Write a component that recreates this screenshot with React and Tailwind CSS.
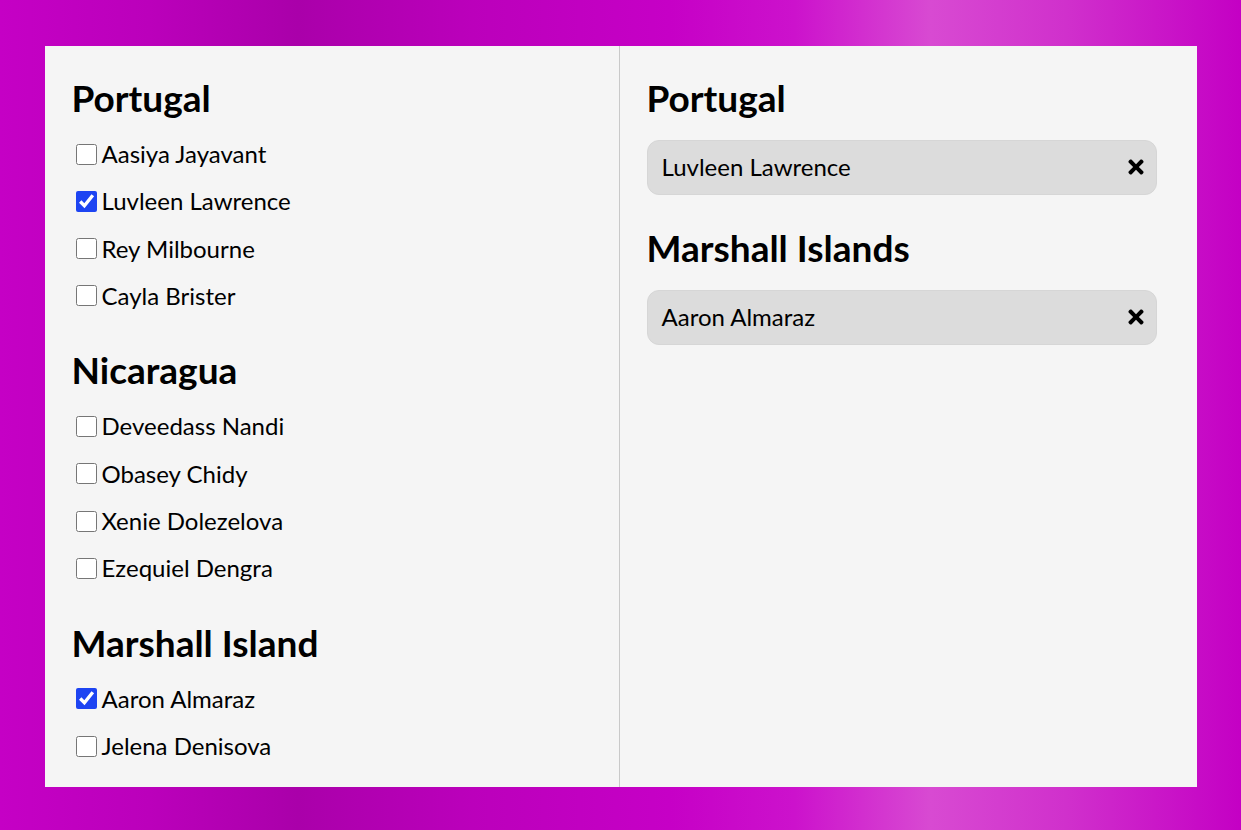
import React, { useState } from "react";
import { FaTimes } from "react-icons/fa";

const groups = [
  { name: "Portugal", people: ["Aasiya Jayavant", "Luvleen Lawrence", "Rey Milbourne", "Cayla Brister"] },
  { name: "Nicaragua", people: ["Deveedass Nandi", "Obasey Chidy", "Xenie Dolezelova", "Ezequiel Dengra"] },
  { name: "Marshall Island", people: ["Aaron Almaraz", "Jelena Denisova"] },
];

const selected = [
  { name: "Portugal", people: ["Luvleen Lawrence"] },
  { name: "Marshall Islands", people: ["Aaron Almaraz"] },
];

export default function App() {
  const [checked, setChecked] = useState({ "Luvleen Lawrence": true, "Aaron Almaraz": true });
  return (
    <div
      className="w-full h-[830px] flex items-start justify-center pt-[46px]"
      style={{
        fontFamily: "Lato, 'Noto Sans', sans-serif",
        background:
          "linear-gradient(to right, #c500c5 0%, #bb00bb 12%, #aa00aa 24%, #bb00bb 38%, #c600c6 54%, #cc12cc 64%, #d84ad2 75%, #d030cc 86%, #c400c4 100%)",
      }}
    >
      <div className="w-[1152px] h-[741px] bg-[#f5f5f5] flex text-black">
        <div className="w-[575px] border-r border-[#c9c9c9] pl-[27px] pt-[30px] flex flex-col gap-[39.5px]">
          {groups.map((g) => (
            <div key={g.name} className="flex flex-col gap-[22px]">
              <h2 className="text-[37px] leading-[43px] font-bold">{g.name}</h2>
              <div className="flex flex-col gap-[21.33px]">
                {g.people.map((p) => (
                  <label key={p} className="flex items-center h-[26px] text-[24px] leading-[26px]">
                    <input
                      type="checkbox"
                      checked={!!checked[p]}
                      onChange={() => setChecked({ ...checked, [p]: !checked[p] })}
                      className="w-[21px] h-[21px] ml-[4px] mr-[5px] accent-[#1d44f2]"
                    />
                    <span>{p}</span>
                  </label>
                ))}
              </div>
            </div>
          ))}
        </div>
        <div className="w-[576px] pl-[27px] pt-[30px] flex flex-col gap-[31.5px]">
          {selected.map((g) => (
            <div key={g.name} className="flex flex-col gap-[20.5px]">
              <h2 className="text-[37px] leading-[43px] font-bold">{g.name}</h2>
              {g.people.map((p) => (
                <div
                  key={p}
                  className="w-[510px] h-[55px] rounded-[12px] bg-[#dcdcdc] border border-[#d6d6d6] flex items-center justify-between pl-[14px] pr-[12px]"
                >
                  <span className="text-[24px] leading-[26px]">{p}</span>
                  <FaTimes className="w-[16px] h-[22px] text-black" />
                </div>
              ))}
            </div>
          ))}
        </div>
      </div>
    </div>
  );
}
